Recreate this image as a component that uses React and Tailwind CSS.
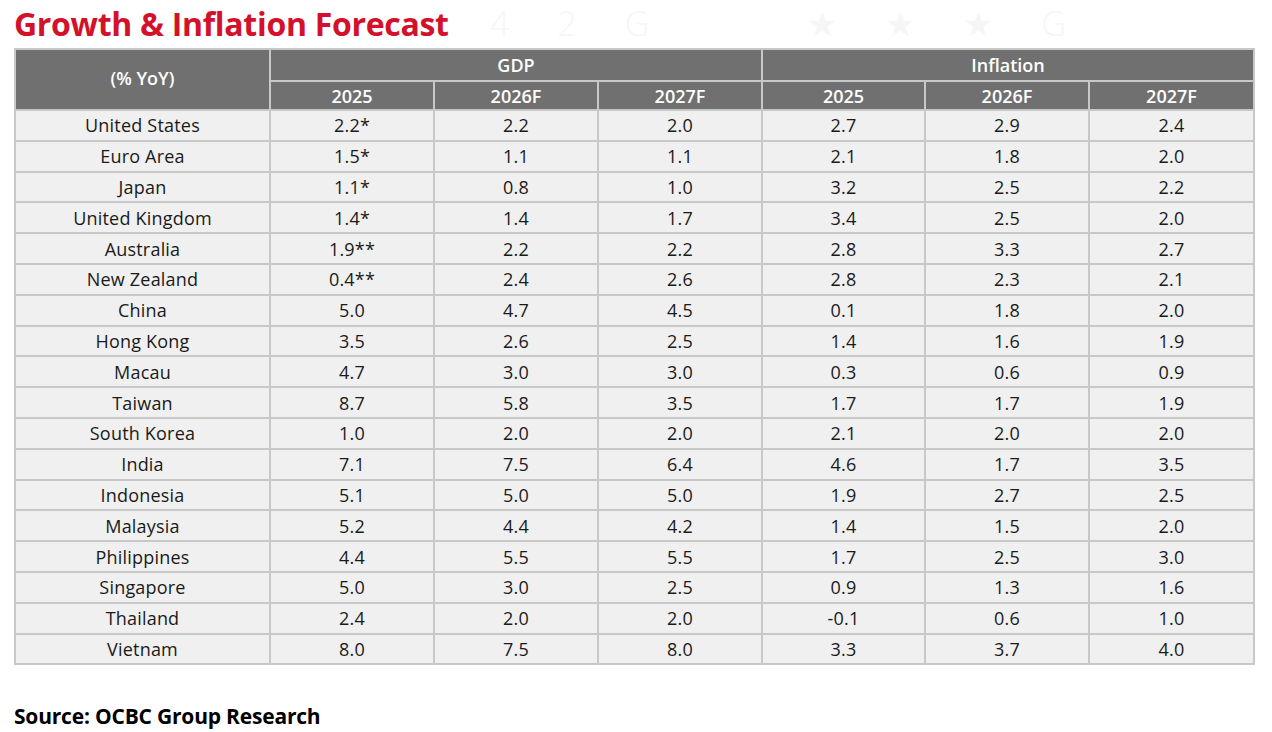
import React from 'react'

const rows = [
  ['United States', '2.2*', '2.2', '2.0', '2.7', '2.9', '2.4'],
  ['Euro Area', '1.5*', '1.1', '1.1', '2.1', '1.8', '2.0'],
  ['Japan', '1.1*', '0.8', '1.0', '3.2', '2.5', '2.2'],
  ['United Kingdom', '1.4*', '1.4', '1.7', '3.4', '2.5', '2.0'],
  ['Australia', '1.9**', '2.2', '2.2', '2.8', '3.3', '2.7'],
  ['New Zealand', '0.4**', '2.4', '2.6', '2.8', '2.3', '2.1'],
  ['China', '5.0', '4.7', '4.5', '0.1', '1.8', '2.0'],
  ['Hong Kong', '3.5', '2.6', '2.5', '1.4', '1.6', '1.9'],
  ['Macau', '4.7', '3.0', '3.0', '0.3', '0.6', '0.9'],
  ['Taiwan', '8.7', '5.8', '3.5', '1.7', '1.7', '1.9'],
  ['South Korea', '1.0', '2.0', '2.0', '2.1', '2.0', '2.0'],
  ['India', '7.1', '7.5', '6.4', '4.6', '1.7', '3.5'],
  ['Indonesia', '5.1', '5.0', '5.0', '1.9', '2.7', '2.5'],
  ['Malaysia', '5.2', '4.4', '4.2', '1.4', '1.5', '2.0'],
  ['Philippines', '4.4', '5.5', '5.5', '1.7', '2.5', '3.0'],
  ['Singapore', '5.0', '3.0', '2.5', '0.9', '1.3', '1.6'],
  ['Thailand', '2.4', '2.0', '2.0', '-0.1', '0.6', '1.0'],
  ['Vietnam', '8.0', '7.5', '8.0', '3.3', '3.7', '4.0'],
]

const years = ['2025', '2026F', '2027F', '2025', '2026F', '2027F']

export default function App() {
  return (
    <div className="relative w-[1272px] h-[732px] bg-white px-[14px] font-['Open_Sans','Lato',sans-serif] overflow-hidden">
      {/* faint watermark */}
      <div className="absolute top-0 left-[490px] flex gap-[48px] text-[34px] leading-[46px] font-light text-[#f6f6f6] select-none">
        <span>4</span><span>2</span><span>G</span>
        <span className="ml-[110px]">★</span><span>★</span><span>★</span><span>G</span>
      </div>

      <h1 className="relative pt-[4px] h-[48px] text-[32px] leading-[40px] font-bold text-[#d3112b] tracking-[-0.3px]">
        Growth &amp; Inflation Forecast
      </h1>

      <table className="relative w-[1239px] table-fixed border-collapse border-2 border-[#c8c8c8] text-[18px] text-[#1a1a1a]">
        <colgroup>
          <col className="w-[255px]" />
          <col className="w-[164px]" />
          <col className="w-[164px]" />
          <col className="w-[164px]" />
          <col className="w-[163px]" />
          <col className="w-[164px]" />
          <col className="w-[165px]" />
        </colgroup>
        <thead className="bg-[#707070] text-white text-[18px]">
          <tr className="h-[32px]">
            <th rowSpan={2} className="border-2 border-[#c8c8c8] font-semibold pb-[2px]">(% YoY)</th>
            <th colSpan={3} className="border-2 border-[#c8c8c8] font-semibold leading-none">GDP</th>
            <th colSpan={3} className="border-2 border-[#c8c8c8] font-semibold leading-none">Inflation</th>
          </tr>
          <tr className="h-[29px]">
            {years.map((y, i) => (
              <th key={i} className="border-2 border-[#c8c8c8] font-semibold leading-none">{y}</th>
            ))}
          </tr>
        </thead>
        <tbody className="bg-[#f0f0f0]">
          {rows.map((r) => (
            <tr key={r[0]} className="h-[30.8px]">
              {r.map((c, i) => (
                <td key={i} className="border-2 border-[#c8c8c8] text-center leading-none tracking-[0.2px]">{c}</td>
              ))}
            </tr>
          ))}
        </tbody>
      </table>

      <p className="mt-[36px] text-[21px] font-bold text-black tracking-[-0.2px]">Source: OCBC Group Research</p>
    </div>
  )
}
